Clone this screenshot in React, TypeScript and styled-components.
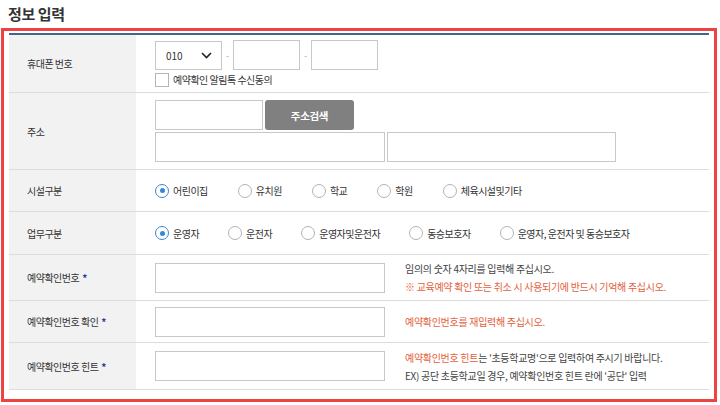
import styled, { createGlobalStyle } from "styled-components"

const GlobalStyle = createGlobalStyle`
    html, body {
        margin: 0;
        padding: 0;
        background: #fff;
    }
    body {
        font-family: "Noto Sans CJK KR", "Noto Sans", sans-serif;
        color: #333;
    }
    * { box-sizing: border-box; }
`

const Page = styled.div`
    width: 720px;
    height: 405px;
    overflow: hidden;
`

const Title = styled.h2`
    margin: 0;
    padding: 3px 8px 0;
    height: 28px;
    font-size: 15px;
    font-weight: 600;
    letter-spacing: -0.4px;
    color: #333;
`

const Frame = styled.div`
    margin: 0 3px 0 1px;
    border: 3px solid #ee4343;
    padding: 2px 5px 9px 5px;
`

const Table = styled.div`
    border-top: 2px solid #42648f;
`

const Row = styled.div<{ $h: number }>`
    display: grid;
    grid-template-columns: 127px 1fr;
    height: ${p => p.$h}px;
    border-bottom: 1px solid #dcdcdc;
`

const Label = styled.div`
    background: #f2f2f2;
    display: flex;
    align-items: center;
    padding-left: 18px;
    font-size: 10px;
    letter-spacing: -0.5px;
    color: #333;
`

const Star = styled.span`
    color: #2d3f9c;
    font-weight: 700;
    margin-left: 3px;
`

const Cell = styled.div`
    display: flex;
    flex-direction: column;
    justify-content: center;
    gap: 2px;
    padding-left: 19px;
`

const Line = styled.div`
    display: flex;
    align-items: center;
`

const Select = styled.div`
    width: 67px;
    height: 29px;
    border: 1px solid #c8c8c8;
    display: flex;
    align-items: center;
    justify-content: space-between;
    padding: 0 9px 0 10px;
    font-size: 10px;
    color: #333;
`

const Dash = styled.span`
    width: 11px;
    text-align: center;
    font-size: 9px;
    color: #aaa;
`

const Input = styled.div<{ $w: number }>`
    width: ${p => p.$w}px;
    height: 30px;
    border: 1px solid #c8c8c8;
    background: #fff;
`

const Gap = styled.div`
    width: 2px;
`

const SearchButton = styled.div`
    width: 89px;
    height: 30px;
    border-radius: 3px;
    background: #808080;
    color: #fff;
    font-size: 10.5px;
    font-weight: 700;
    letter-spacing: -0.3px;
    display: flex;
    align-items: center;
    justify-content: center;
`

const Check = styled.span`
    width: 14px;
    height: 14px;
    border: 1px solid #b5b5b5;
    background: #fff;
    margin-right: 4px;
`

const Small = styled.span`
    font-size: 10px;
    letter-spacing: -0.5px;
    color: #333;
`

const RadioGroup = styled.div`
    display: flex;
    align-items: center;
`

const RadioItem = styled.label<{ $gap: number }>`
    display: flex;
    align-items: center;
    margin-right: ${p => p.$gap}px;
    font-size: 10px;
    letter-spacing: -0.5px;
    color: #333;
`

const Circle = styled.span<{ $on?: boolean }>`
    width: 14px;
    height: 14px;
    border-radius: 50%;
    border: 1px solid ${p => (p.$on ? "#3a86d4" : "#b3b3b3")};
    margin-right: 4px;
    display: flex;
    align-items: center;
    justify-content: center;
    &::after {
        content: "";
        width: 5px;
        height: 5px;
        border-radius: 50%;
        background: ${p => (p.$on ? "#3a86d4" : "transparent")};
    }
`

const Help = styled.div`
    margin-left: 20px;
    display: flex;
    flex-direction: column;
    gap: 3px;
    font-size: 10px;
    letter-spacing: -0.3px;
    color: #444;
`

const Warn = styled.span`
    color: #e4603c;
`

const Chevron = () => (
    <svg width="11" height="7" viewBox="0 0 11 7">
        <path d="M1 1l4.5 4.5L10 1" fill="none" stroke="#222" strokeWidth="1.6" />
    </svg>
)

type Opt = { text: string; gap: number }

const Radios = ({ items }: { items: Opt[] }) => (
    <RadioGroup>
        {items.map((o, i) => (
            <RadioItem key={o.text} $gap={o.gap}>
                <Circle $on={i === 0} />
                {o.text}
            </RadioItem>
        ))}
    </RadioGroup>
)

const facility: Opt[] = [
    { text: "어린이집", gap: 30 },
    { text: "유치원", gap: 30 },
    { text: "학교", gap: 30 },
    { text: "학원", gap: 30 },
    { text: "체육시설및기타", gap: 0 },
]

const work: Opt[] = [
    { text: "운영자", gap: 29 },
    { text: "운전자", gap: 29 },
    { text: "운영자및운전자", gap: 29 },
    { text: "동승보호자", gap: 29 },
    { text: "운영자, 운전자 및 동승보호자", gap: 0 },
]

export default function App() {
    return (
        <Page>
            <GlobalStyle />
            <Title>정보 입력</Title>
            <Frame>
                <Table>
                    <Row $h={58}>
                        <Label>휴대폰 번호</Label>
                        <Cell>
                            <Line>
                                <Select>010<Chevron /></Select>
                                <Dash>-</Dash>
                                <Input $w={67} />
                                <Dash>-</Dash>
                                <Input $w={67} />
                            </Line>
                            <Line>
                                <Check />
                                <Small>예약확인 알림톡 수신동의</Small>
                            </Line>
                        </Cell>
                    </Row>
                    <Row $h={77}>
                        <Label>주소</Label>
                        <Cell>
                            <Line>
                                <Input $w={108} />
                                <Gap />
                                <SearchButton>주소검색</SearchButton>
                            </Line>
                            <Line>
                                <Input $w={230} />
                                <Gap />
                                <Input $w={229} />
                            </Line>
                        </Cell>
                    </Row>
                    <Row $h={42}>
                        <Label>시설구분</Label>
                        <Cell><Radios items={facility} /></Cell>
                    </Row>
                    <Row $h={43}>
                        <Label>업무구분</Label>
                        <Cell><Radios items={work} /></Cell>
                    </Row>
                    <Row $h={46}>
                        <Label>예약확인번호<Star>*</Star></Label>
                        <Cell>
                            <Line>
                                <Input $w={230} />
                                <Help>
                                    <span>임의의 숫자 4자리를 입력해 주십시오.</span>
                                    <Warn>※ 교육예약 확인 또는 취소 시 사용되기에 반드시 기억해 주십시오.</Warn>
                                </Help>
                            </Line>
                        </Cell>
                    </Row>
                    <Row $h={42}>
                        <Label>예약확인번호 확인<Star>*</Star></Label>
                        <Cell>
                            <Line>
                                <Input $w={230} />
                                <Help>
                                    <Warn>예약확인번호를 재입력해 주십시오.</Warn>
                                </Help>
                            </Line>
                        </Cell>
                    </Row>
                    <Row $h={47}>
                        <Label>예약확인번호 힌트<Star>*</Star></Label>
                        <Cell>
                            <Line>
                                <Input $w={230} />
                                <Help>
                                    <span><Warn>예약확인번호 힌트</Warn>는 '초등학교명'으로 입력하여 주시기 바랍니다.</span>
                                    <span>EX) 공단 초등학교일 경우, 예약확인번호 힌트 란에 '공단' 입력</span>
                                </Help>
                            </Line>
                        </Cell>
                    </Row>
                </Table>
            </Frame>
        </Page>
    )
}
